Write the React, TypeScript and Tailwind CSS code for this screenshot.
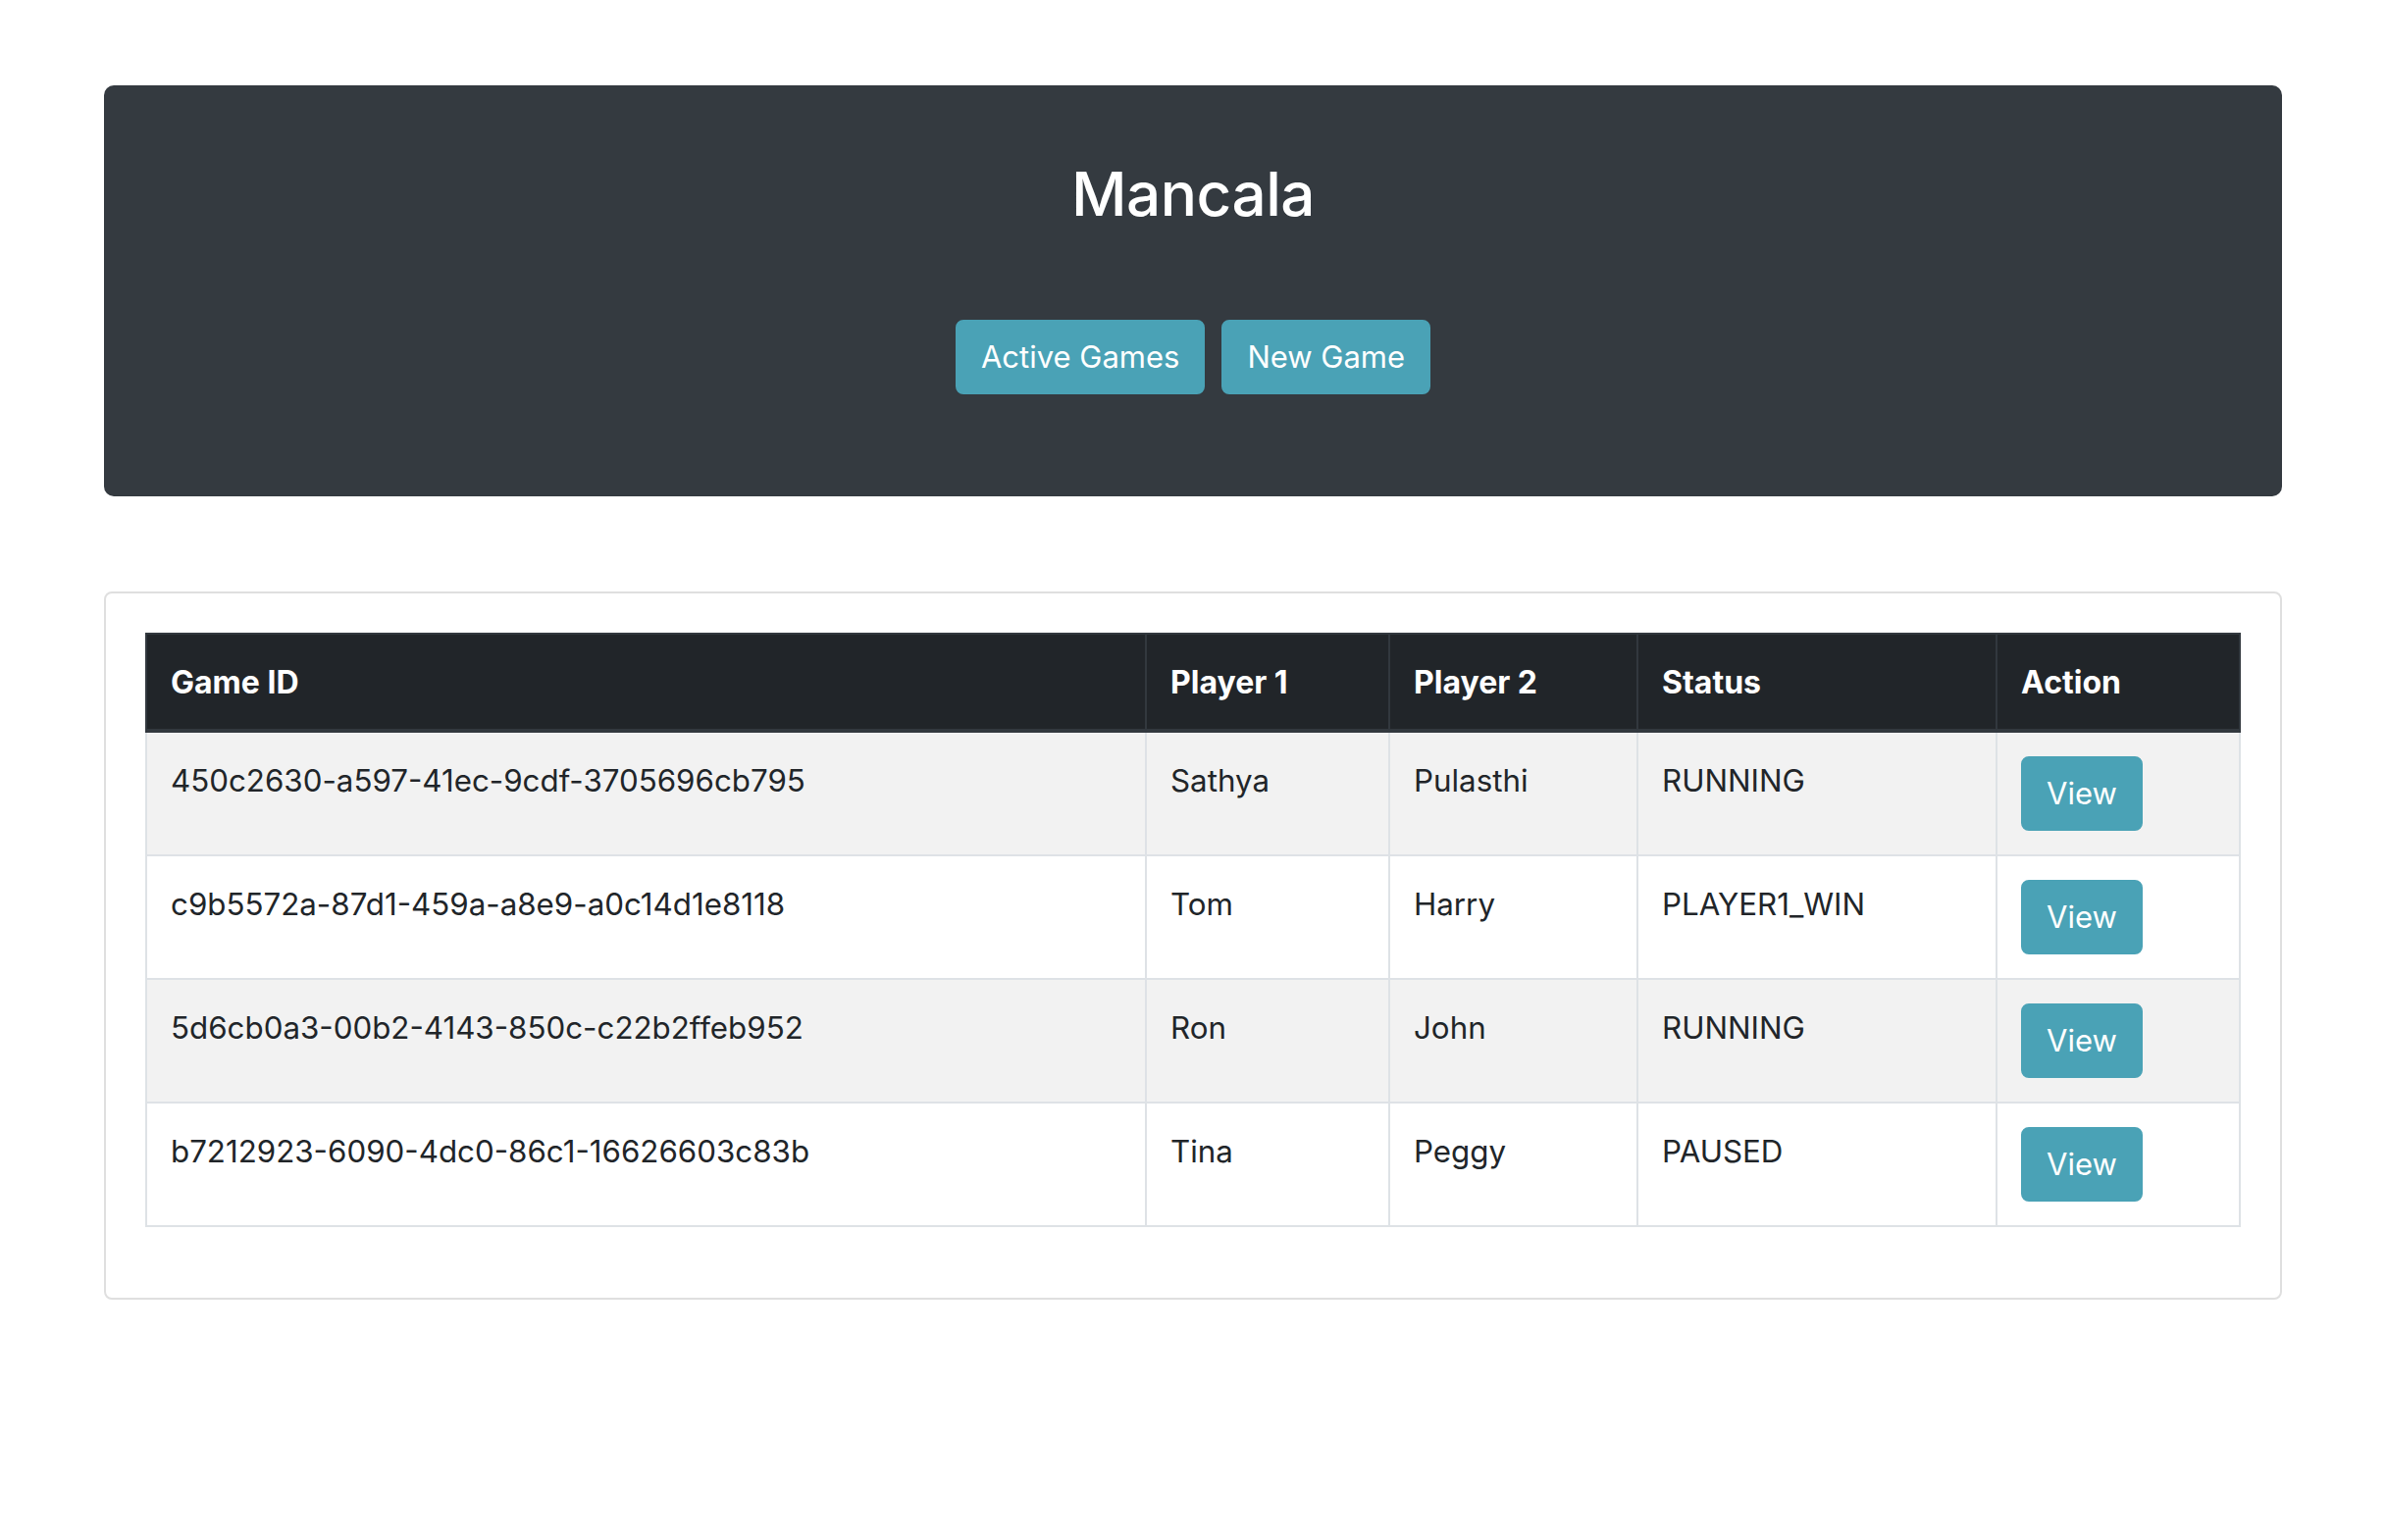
const games = [
  { id: "450c2630-a597-41ec-9cdf-3705696cb795", p1: "Sathya", p2: "Pulasthi", status: "RUNNING" },
  { id: "c9b5572a-87d1-459a-a8e9-a0c14d1e8118", p1: "Tom", p2: "Harry", status: "PLAYER1_WIN" },
  { id: "5d6cb0a3-00b2-4143-850c-c22b2ffeb952", p1: "Ron", p2: "John", status: "RUNNING" },
  { id: "b7212923-6090-4dc0-86c1-16626603c83b", p1: "Tina", p2: "Peggy", status: "PAUSED" },
]

const btn =
  "inline-block h-[76px] rounded-[8px] border-2 border-[#4aa2b6] bg-[#4aa2b6] px-[24px] text-[31px] leading-[48px] text-white"

const td = "border-2 border-[#dee2e6] px-[24px] pt-[25px] pb-[23px] align-top"

export default function App() {
  return (
    <div className="min-h-screen bg-white font-['Inter','Liberation_Sans',sans-serif] text-[#212529]">
      <div className="mx-auto w-[2220px] pt-[87px]">
        {/* Jumbotron */}
        <div className="h-[419px] rounded-[10px] bg-[#343a40] pt-[72px] text-center text-white">
          <h2 className="text-[62px] font-medium leading-[77px] tracking-[-0.5px]">Mancala</h2>
          <div className="mt-[90px] flex justify-center gap-[17px]">
            <button className={btn}>Active Games</button>
            <button className={btn}>New Game</button>
          </div>
        </div>

        {/* Games list */}
        <div className="mt-[97px] rounded-[8px] border-2 border-[#dfdfdf] p-[40px]">
          <table className="mb-[32px] w-full border-collapse text-left text-[31.3px] leading-[48px]">
            <colgroup>
              <col className="w-[1019px]" />
              <col className="w-[248px]" />
              <col className="w-[253px]" />
              <col className="w-[366px]" />
              <col className="w-[248px]" />
            </colgroup>
            <thead>
              <tr className="bg-[#212529] text-white">
                {["Game ID", "Player 1", "Player 2", "Status", "Action"].map((h) => (
                  <th
                    key={h}
                    className="border-2 border-b-4 border-[#32383e] px-[24px] pt-[25px] pb-[23px] align-bottom text-[32px] font-bold"
                  >
                    {h}
                  </th>
                ))}
              </tr>
            </thead>
            <tbody>
              {games.map((g, i) => (
                <tr key={g.id} className={i % 2 === 0 ? "bg-[#f2f2f2]" : "bg-white"}>
                  <td className={td}>{g.id}</td>
                  <td className={td}>{g.p1}</td>
                  <td className={td}>{g.p2}</td>
                  <td className={td}>{g.status}</td>
                  <td className="border-2 border-[#dee2e6] p-[24px] align-top">
                    <button className={btn}>View</button>
                  </td>
                </tr>
              ))}
            </tbody>
          </table>
        </div>
      </div>
    </div>
  )
}
